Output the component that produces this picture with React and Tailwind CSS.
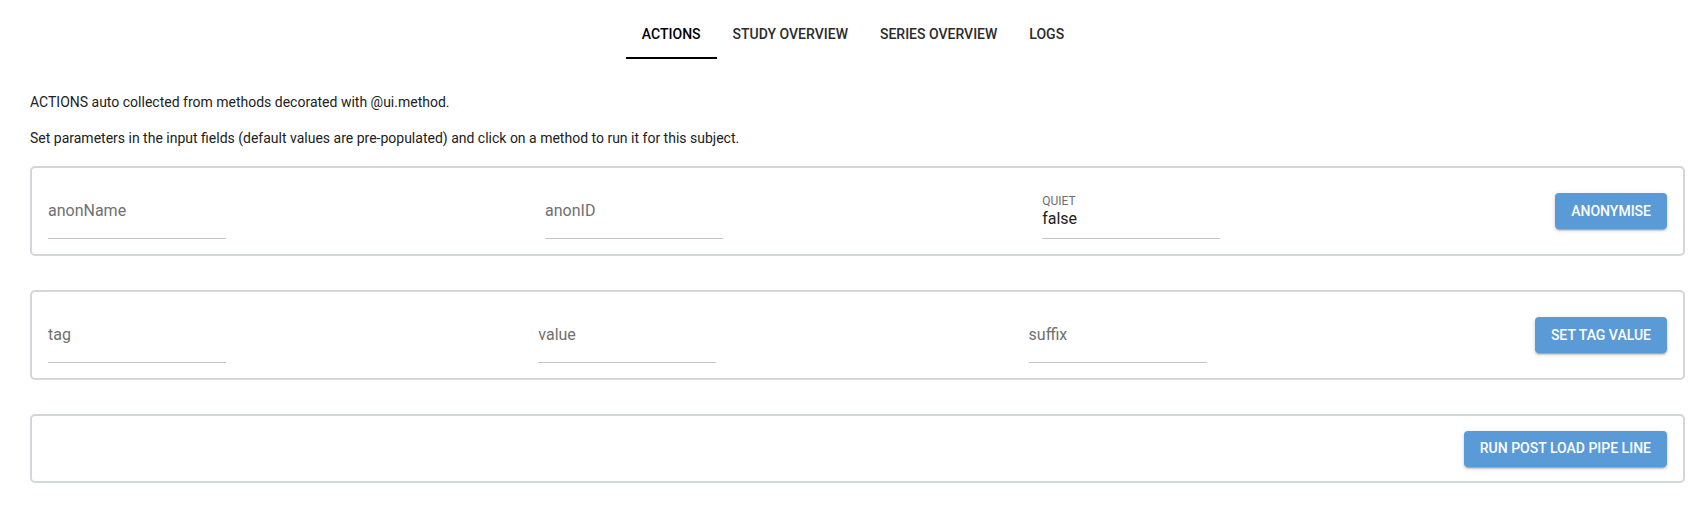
import React from 'react';

const tabs = ['ACTIONS', 'STUDY OVERVIEW', 'SERIES OVERVIEW', 'LOGS'];

const Field = ({ label, value }) => {
  if (value !== undefined) {
    return (
      <div className="w-[178px] border-b border-[#c4c4c4] pb-[9.5px]">
        <div className="text-[12px] leading-[16px] text-[#6e6e6e]">{label}</div>
        <div className="text-[16px] leading-[20px] text-[#212121]">{value}</div>
      </div>
    );
  }
  return (
    <div className="w-[178px] border-b border-[#c4c4c4] pb-[17px]">
      <div className="text-[16px] leading-[20px] text-[#707070]">{label}</div>
    </div>
  );
};

const ActionButton = ({ children }) => (
  <button className="h-[36px] px-4 rounded-[4px] bg-[#5a9ad6] text-white text-[14px] font-medium shadow-[0_3px_1px_-2px_rgba(0,0,0,0.2),0_2px_2px_0_rgba(0,0,0,0.14),0_1px_5px_0_rgba(0,0,0,0.12)]">
    {children}
  </button>
);

const MethodCard = ({ fields, action }) => (
  <div className="h-[90px] border-2 border-[#d3d6dc] rounded-[5px] px-4 flex items-stretch">
    {fields.map((f) => (
      <div key={f.label} className="flex-1 flex flex-col justify-end pb-[15px]">
        <Field label={f.label} value={f.value} />
      </div>
    ))}
    <div className="ml-4 flex items-center">
      <ActionButton>{action}</ActionButton>
    </div>
  </div>
);

export default function App() {
  return (
    <div className="w-[1706px] h-[511px] bg-white font-['Roboto',sans-serif] text-[#212121] overflow-hidden">
      {/* tab bar */}
      <div className="pt-[11px] flex justify-center">
        <div className="flex h-[48px]">
          {tabs.map((t, i) => (
            <div
              key={t}
              className={`px-4 flex items-center justify-center text-[14px] font-medium border-b-2 ${
                i === 0 ? 'border-black text-black' : 'border-transparent text-[#2b2b2b]'
              }`}
            >
              {t}
            </div>
          ))}
        </div>
      </div>

      <div className="pl-[30px] pr-[21px] pt-[33px]">
        <p className="text-[14px] leading-[20px]">ACTIONS auto collected from methods decorated with @ui.method.</p>
        <p className="mt-4 text-[14px] leading-[20px]">
          Set parameters in the input fields (default values are pre-populated) and click on a method to run it for this subject.
        </p>

        <div className="mt-[18px] flex flex-col gap-[34px]">
          <MethodCard
            fields={[{ label: 'anonName' }, { label: 'anonID' }, { label: 'QUIET', value: 'false' }]}
            action="ANONYMISE"
          />
          <MethodCard
            fields={[{ label: 'tag' }, { label: 'value' }, { label: 'suffix' }]}
            action="SET TAG VALUE"
          />
          <div className="h-[69px] border-2 border-[#d3d6dc] rounded-[5px] px-4 flex items-center justify-end">
            <ActionButton>RUN POST LOAD PIPE LINE</ActionButton>
          </div>
        </div>
      </div>
    </div>
  );
}
